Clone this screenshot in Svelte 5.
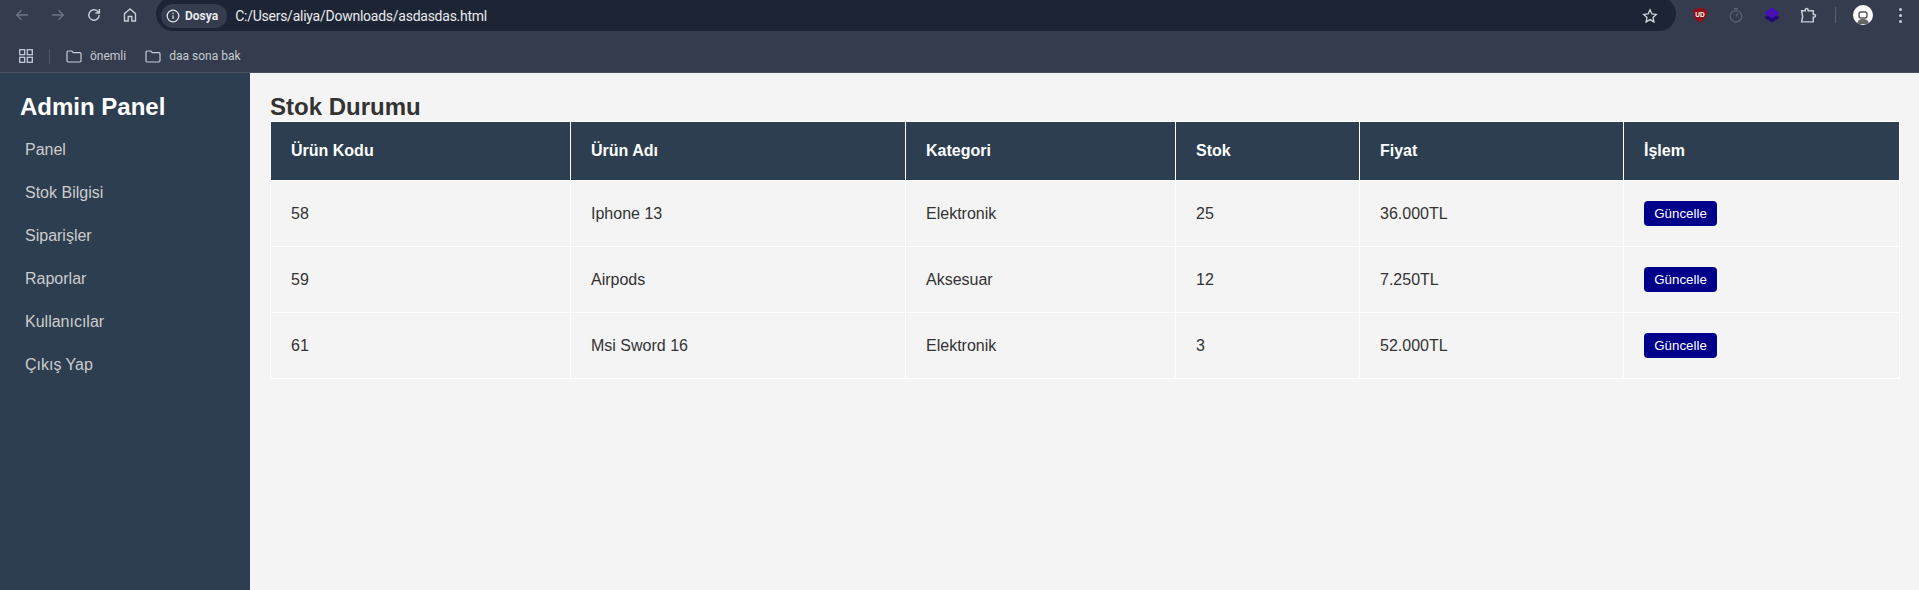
<script lang="ts">
  const menu = ["Panel", "Stok Bilgisi", "Siparişler", "Raporlar", "Kullanıcılar", "Çıkış Yap"];
  const columns = ["Ürün Kodu", "Ürün Adı", "Kategori", "Stok", "Fiyat", "İşlem"];
  const products = [
    { code: 58, name: "Iphone 13", category: "Elektronik", stock: 25, price: "36.000TL" },
    { code: 59, name: "Airpods", category: "Aksesuar", stock: 12, price: "7.250TL" },
    { code: 61, name: "Msi Sword 16", category: "Elektronik", stock: 3, price: "52.000TL" }
  ];
</script>

<div class="window">
  <header class="browser">
    <div class="toolbar">
      <div class="nav">
        <span class="tool dim">
          <svg viewBox="0 0 16 16"><path d="M14 8H3M7.5 3.2 2.7 8l4.8 4.8" /></svg>
        </span>
        <span class="tool dim">
          <svg viewBox="0 0 16 16"><path d="M2 8h11M8.5 3.2 13.3 8l-4.8 4.8" /></svg>
        </span>
        <span class="tool">
          <svg viewBox="0 0 16 16"><path d="M13.2 8a5.2 5.2 0 1 1-1.5-3.7L13.4 6M13.400 2v4h-4" /></svg>
        </span>
        <span class="tool">
          <svg viewBox="0 0 16 16"><path d="M2.500 14V6.600L8 2l5.500 4.600V14H9.800V9.500H6.200V14z" /></svg>
        </span>
      </div>

      <div class="omnibox">
        <span class="chip">
          <svg viewBox="0 0 14 14"><circle cx="7" cy="7" r="5.800" /><path d="M7 6.300v3.700M7 3.800v1.200" /></svg>
          Dosya
        </span>
        <span class="url">C:/Users/aliya/Downloads/asdasdas.html</span>
        <svg class="star" viewBox="0 0 16 16"><path d="m8 1.800 1.900 4.100 4.400.5-3.300 3 .9 4.500L8 11.600l-3.900 2.300.9-4.500-3.300-3 4.400-.5z" /></svg>
      </div>

      <div class="extensions">
        <span class="tool">
          <svg viewBox="0 0 16 16" class="solid">
            <path d="M8 .5 15 2.800c0 6.200-1.500 10-7 12.700C2.500 12.800 1 9 1 2.800z" fill="#8c1118" />
            <text x="8" y="9.800" text-anchor="middle" class="ub">UD</text>
          </svg>
        </span>
        <span class="tool timer">
          <svg viewBox="0 0 16 16"><circle cx="8" cy="9.300" r="5.700" /><path d="M6 1.700h4M8 9.300l2-3" /></svg>
        </span>
        <span class="tool">
          <svg viewBox="0 0 16 16" class="solid">
            <path d="m8 5.500 8 5-8 5-8-5z" fill="#210a70" />
            <path d="m8 .5 8 5.500-8 5.500L0 6z" fill="#4a0fb8" />
          </svg>
        </span>
        <span class="tool">
          <svg class="puzzle" viewBox="0 0 16 16"><path d="M1.500 3.500h3.500V2.600a1.300 1.300 0 0 1 2.600 0v.9h4.900v3.500h.8a1.300 1.300 0 0 1 0 2.600h-.8v4.400H1.500l1-4.900-1-5.600z" /></svg>
        </span>
        <i class="divider"></i>
        <span class="tool">
          <span class="avatar">
            <svg viewBox="0 0 20 20" class="solid">
              <rect x="6" y="7" width="8" height="6" rx="2" fill="none" stroke="#555" stroke-width="1.400" />
              <path d="M4 19c.5-4 3-5 6-5s5.500 1 6 5z" fill="#666" />
            </svg>
          </span>
        </span>
        <span class="tool dots"><i></i><i></i><i></i></span>
      </div>
    </div>

    <nav class="bookmarks">
      <svg class="apps" viewBox="0 0 14 14">
        <rect x="0.700" y="0.700" width="5" height="5" />
        <rect x="8.300" y="0.700" width="5" height="5" />
        <rect x="0.700" y="8.300" width="5" height="5" />
        <rect x="8.300" y="8.300" width="5" height="5" />
      </svg>
      <i class="bar"></i>
      <span class="bookmark">
        <svg viewBox="0 0 16 13"><path d="M1 2.200c0-.7.500-1.200 1.200-1.200h3.600l1.500 1.700h6.500c.700 0 1.200.5 1.200 1.200v6.900c0 .7-.5 1.200-1.200 1.200H2.200c-.7 0-1.200-.5-1.200-1.200z" /></svg>
        önemli
      </span>
      <span class="bookmark">
        <svg viewBox="0 0 16 13"><path d="M1 2.200c0-.7.500-1.200 1.200-1.200h3.600l1.500 1.700h6.500c.700 0 1.200.5 1.200 1.200v6.900c0 .7-.5 1.200-1.200 1.200H2.200c-.7 0-1.200-.5-1.200-1.200z" /></svg>
        daa sona bak
      </span>
    </nav>
  </header>

  <div class="page">
    <aside class="sidebar">
      <h2>Admin Panel</h2>
      <ul>
        {#each menu as item (item)}
          <li>{item}</li>
        {/each}
      </ul>
    </aside>

    <main class="content">
      <h2>Stok Durumu</h2>
      <table>
        <thead>
          <tr>
            {#each columns as col (col)}
              <th>{col}</th>
            {/each}
          </tr>
        </thead>
        <tbody>
          {#each products as p (p.code)}
            <tr>
              <td>{p.code}</td>
              <td>{p.name}</td>
              <td>{p.category}</td>
              <td>{p.stock}</td>
              <td>{p.price}</td>
              <td><button>Güncelle</button></td>
            </tr>
          {/each}
        </tbody>
      </table>
    </main>
  </div>
</div>

<style>
  :global(body) {
    margin: 0;
    overflow: hidden;
  }

  .window {
    display: flex;
    flex-direction: column;
    height: 100vh;
    font-family: "Liberation Sans", Arial, sans-serif;
  }

  /* browser chrome */
  .browser {
    flex: none;
    height: 72px;
    background: #343c4d;
    border-bottom: 1px solid #4a505d;
    font-family: Roboto, "Open Sans", sans-serif;
  }

  .toolbar {
    display: flex;
    align-items: center;
    height: 40px;
    padding: 0 2px 0 4px;
    box-sizing: border-box;
  }

  .nav,
  .extensions {
    display: flex;
    align-items: center;
    flex: none;
    height: 30px;
    margin-top: -10px;
  }

  .tool {
    display: flex;
    align-items: center;
    justify-content: center;
    width: 36px;
    height: 30px;
  }

  .tool svg {
    width: 16px;
    height: 16px;
    fill: none;
    stroke: #c7ccd6;
    stroke-width: 1.400;
  }

  .tool.dim svg {
    stroke: #6d7482;
  }

  .tool.timer svg {
    stroke: #5a5f69;
  }

  .tool svg.solid {
    stroke: none;
  }

  .tool svg.puzzle {
    width: 17px;
    height: 17px;
  }

  .ub {
    font-family: "Liberation Sans", sans-serif;
    font-size: 6.500px;
    font-weight: 700;
    fill: #fff;
  }

  .omnibox {
    flex: 1;
    display: flex;
    align-items: center;
    height: 34px;
    margin: -12px 6px 0 8px;
    padding: 0 15px 0 5px;
    border-radius: 17px;
    background: #1d2535;
    box-sizing: border-box;
  }

  .chip {
    display: flex;
    align-items: center;
    gap: 5px;
    height: 24px;
    margin-top: 4px;
    padding: 0 9px 0 5px;
    border-radius: 12px;
    background: #343c4d;
    color: #e8eaed;
    font-size: 12px;
    font-weight: 700;
  }

  .chip svg {
    width: 14px;
    height: 14px;
    fill: none;
    stroke: #e8eaed;
    stroke-width: 1.200;
  }

  .url {
    flex: 1;
    margin: 4px 0 0 8px;
    color: #e8eaed;
    font-size: 14px;
    letter-spacing: -0.250px;
  }

  .star {
    width: 16px;
    height: 16px;
    margin-top: 4px;
    margin-right: 3px;
    fill: none;
    stroke: #d5d8de;
    stroke-width: 1.300;
  }

  .divider {
    width: 1px;
    height: 16px;
    margin: 0 9px;
    background: #5a6170;
  }

  .avatar {
    display: block;
    width: 20px;
    height: 20px;
    border-radius: 50%;
    background: #fff;
    overflow: hidden;
  }

  .avatar svg {
    display: block;
    width: 20px;
    height: 20px;
  }

  .dots {
    flex-direction: column;
    gap: 3px;
    margin: 0 -1px 0 1px;
  }

  .dots i {
    width: 3px;
    height: 3px;
    border-radius: 50%;
    background: #c7ccd6;
  }

  .bookmarks {
    display: flex;
    align-items: center;
    height: 32px;
    padding-left: 19px;
    color: #c7cad1;
    font-size: 12px;
  }

  .apps {
    width: 14px;
    height: 14px;
    fill: none;
    stroke: #c7ccd6;
    stroke-width: 1.300;
  }

  .bar {
    width: 1px;
    height: 15px;
    margin: 0 16px;
    background: #525967;
  }

  .bookmark {
    display: flex;
    align-items: center;
    gap: 8px;
    margin-right: 19px;
  }

  .bookmark svg {
    width: 16px;
    height: 13px;
    fill: none;
    stroke: #c7ccd6;
    stroke-width: 1.200;
  }

  /* page */
  .page {
    flex: 1;
    display: flex;
    min-height: 0;
    background: #f4f4f4;
  }

  .sidebar {
    flex: none;
    width: 250px;
    padding: 20px;
    box-sizing: border-box;
    background: #2c3e50;
    color: #fff;
  }

  .sidebar h2 {
    margin: 0 0 7px;
    font-size: 24px;
    line-height: 28px;
  }

  ul {
    margin: 0;
    padding: 0;
    list-style: none;
  }

  li {
    padding: 12.500px 5px;
    color: #ccc;
    font-size: 16px;
    line-height: 18px;
  }

  .content {
    flex: 1;
    min-width: 0;
    padding: 20px 19px 20px 20px;
    color: #333;
  }

  .content h2 {
    margin: 0;
    font-size: 24px;
    line-height: 28px;
  }

  table {
    width: 100%;
    border-collapse: collapse;
    table-layout: fixed;
    font-size: 16px;
  }

  th,
  td {
    box-sizing: border-box;
    padding: 20px;
    border: 1px solid #fff;
    text-align: left;
    line-height: 18px;
  }

  th {
    background: #2c3e50;
    color: #fff;
  }

  th:nth-child(1) { width: 300px; }
  th:nth-child(2) { width: 335px; }
  th:nth-child(3) { width: 270px; }
  th:nth-child(4) { width: 184px; }
  th:nth-child(5) { width: 264px; }

  button {
    display: block;
    width: 73px;
    height: 25px;
    padding: 0;
    border: none;
    border-radius: 4px;
    background: #00008b;
    color: #fff;
    font-family: "Liberation Sans", Arial, sans-serif;
    font-size: 13.330px;
  }
</style>
